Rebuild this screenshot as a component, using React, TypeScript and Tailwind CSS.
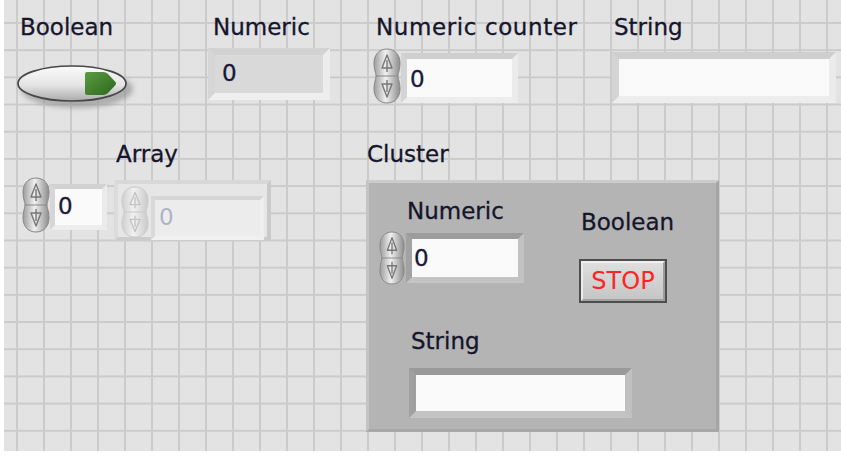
import React from "react";

function Label({ children, className = "" }: { children: React.ReactNode; className?: string }) {
  return (
    <div
      className={`font-['DejaVu_Sans',sans-serif] text-[23px] leading-[24px] text-[#15152b] whitespace-nowrap [-webkit-text-stroke:0.3px_#15152b] ${className}`}
    >
      {children}
    </div>
  );
}

function Value({ children, dim = false }: { children: React.ReactNode; dim?: boolean }) {
  return (
    <span
      className={`font-['DejaVu_Sans',sans-serif] text-[23px] leading-[24px] ${dim ? "text-[#aab4c6]" : "text-[#18183a] [-webkit-text-stroke:0.3px_#18183a]"}`}
    >
      {children}
    </span>
  );
}

/* Up/down increment arrows drawn as a rounded double-lobed knob */
function Spinner({ dim = false, w = 28, h = 56 }: { dim?: boolean; w?: number; h?: number }) {
  const id = dim ? "spin-dim" : "spin";
  const edge = dim ? "#c9c9c9" : "#888888";
  const arrow = dim ? "#c3c3c3" : "#767676";
  return (
    <svg width={w} height={h} viewBox="0 0 28 56" preserveAspectRatio="none" className="shrink-0">
      <defs>
        <linearGradient id={id} x1="0" x2="1" y1="0" y2="0">
          <stop offset="0" stopColor={dim ? "#cfcfcf" : "#9c9c9c"} />
          <stop offset="0.45" stopColor={dim ? "#f1f1f1" : "#f0f0f0"} />
          <stop offset="1" stopColor={dim ? "#c9c9c9" : "#8c8c8c"} />
        </linearGradient>
      </defs>
      <path
        d="M14 1 C23 1 27 8 27 15 C27 22 25 25 25 28 C25 31 27 34 27 41 C27 48 23 55 14 55 C5 55 1 48 1 41 C1 34 3 31 3 28 C3 25 1 22 1 15 C1 8 5 1 14 1 Z"
        fill={`url(#${id})`}
        stroke={edge}
        strokeWidth="1"
      />
      <line x1="3" y1="28" x2="25" y2="28" stroke={edge} strokeWidth="1" />
      <path d="M14 7 L19 20 H9 Z" fill="none" stroke={arrow} strokeWidth="1.4" strokeLinejoin="round" />
      <line x1="14" y1="12" x2="14" y2="24" stroke={arrow} strokeWidth="1.4" />
      <path d="M14 49 L19 36 H9 Z" fill="none" stroke={arrow} strokeWidth="1.4" strokeLinejoin="round" />
      <line x1="14" y1="32" x2="14" y2="44" stroke={arrow} strokeWidth="1.4" />
    </svg>
  );
}

/* Oval push button with a green lamp */
function OvalButton() {
  return (
    <svg width="124" height="48" viewBox="0 0 124 48" className="block">
      <defs>
        <linearGradient id="oval-fill" x1="0" x2="0" y1="0" y2="1">
          <stop offset="0" stopColor="#fbfbfb" />
          <stop offset="0.55" stopColor="#e4e4e4" />
          <stop offset="1" stopColor="#ababab" />
        </linearGradient>
        <linearGradient id="lamp" x1="0" x2="1" y1="0" y2="1">
          <stop offset="0" stopColor="#5c9c42" />
          <stop offset="1" stopColor="#2b671b" />
        </linearGradient>
        <filter id="oval-shadow" x="-20%" y="-40%" width="140%" height="180%">
          <feGaussianBlur stdDeviation="2.5" />
        </filter>
      </defs>
      <ellipse cx="60" cy="24" rx="56" ry="19" fill="#8a8a8a" opacity="0.6" filter="url(#oval-shadow)" />
      <ellipse cx="55" cy="18.5" rx="54" ry="17.5" fill="url(#oval-fill)" stroke="#474747" strokeWidth="1.7" />
      <path d="M70 7 H86 Q89 7 91 9 L98 16.5 Q100 18.5 98 20.5 L91 28 Q89 30 86 30 H70 Q68 30 68 28 V9 Q68 7 70 7 Z" fill="url(#lamp)" />
    </svg>
  );
}

export default function App() {
  return (
    <div className="w-[841px] h-[458px] bg-white overflow-hidden">
      <div className="ml-[4px] w-[837px] h-[451px] bg-[#e3e3e3] bg-[linear-gradient(to_right,#cbcbcb_2px,transparent_2px),linear-gradient(to_bottom,#cbcbcb_2px,transparent_2px)] bg-size-[27px_27px,27px_27.2px] bg-position-[12px_0px,0px_22px] pt-[15px]">
        {/* top row */}
        <div className="flex items-start h-[127px]">
          <div className="ml-[13px] w-[191px]">
            <Label className="ml-[3px]">Boolean</Label>
            <div className="mt-[26px]">
              <OvalButton />
            </div>
          </div>

          <div className="w-[165px]">
            <Label className="ml-[5px]">Numeric</Label>
            <div className="mt-[9px] w-[122px] h-[52px] border-[7px] border-t-[#d2d2d2] border-l-[#d6d6d6] border-r-[#ededed] border-b-[#efefef]">
              <div className="h-full bg-[#d9d9d9] pl-[7px] pt-[6px] flex items-start">
                <Value>0</Value>
              </div>
            </div>
          </div>

          <div className="w-[239px]">
            <Label className="ml-[3px] tracking-[0.6px]">Numeric counter</Label>
            <div className="mt-[9px] flex items-start">
              <Spinner />
              <div className="mt-[5px] w-[117px] h-[50px] border-[6px] border-t-[#cfcfcf] border-l-[#d4d4d4] border-r-[#ebebeb] border-b-[#ededed]">
                <div className="h-full bg-[#fafafa] pl-[3px] pt-[8px] flex items-start">
                  <Value>0</Value>
                </div>
              </div>
            </div>
          </div>

          <div>
            <Label className="ml-[2px]">String</Label>
            <div className="mt-[13px] w-[224px] h-[51px] border-[7px] border-t-[#cfcfcf] border-l-[#d4d4d4] border-r-[#ebebeb] border-b-[#ededed]">
              <div className="h-full bg-[#fafafa]" />
            </div>
          </div>
        </div>

        {/* second row */}
        <div className="flex items-start">
          <div className="ml-[18px] mt-[35px] flex items-start">
            <Spinner />
            <div className="mt-[7px] w-[57px] h-[46px] border-[5px] border-t-[#d2d2d2] border-l-[#d6d6d6] border-r-[#ebebeb] border-b-[#ededed]">
              <div className="h-full bg-[#fafafa] pl-[3px] pt-[5px] flex items-start">
                <Value>0</Value>
              </div>
            </div>
          </div>

          <div className="ml-[7px] w-[252px]">
            <Label className="ml-[2px]">Array</Label>
            <div className="mt-[14px] w-[157px] h-[61px] border-[4px] border-t-[#d8d8d8] border-l-[#dcdcdc] border-r-[#c9c9c9] border-b-[#cccccc] bg-[#e6e6e6] pl-[3px] pt-[2px] flex items-start">
              <Spinner dim w={28} h={52} />
              <div className="ml-[2px] mt-[10px] w-[113px] h-[44px] border-[4px] border-t-[#d6d6d6] border-l-[#d9d9d9] border-r-[#efefef] border-b-[#f0f0f0]">
                <div className="h-full bg-[#ececec] pl-[4px] pt-[5px] flex items-start">
                  <Value dim>0</Value>
                </div>
              </div>
            </div>
          </div>

          <div>
            <Label className="ml-[1px]">Cluster</Label>
            <div className="mt-[14px] w-[353px] h-[252px] bg-[#b4b4b4] border-[3px] border-t-[#cbcbcb] border-l-[#c4c4c4] border-r-[#a5a5a5] border-b-[#a8a8a8] pt-[16px] pl-[10px] flex items-start">
              <div className="w-[200px]">
                <Label className="ml-[28px]">Numeric</Label>
                <div className="mt-[8px] flex items-start">
                  <Spinner w={26} h={54} />
                  <div className="ml-[1px] mt-[2px] w-[118px] h-[50px] border-[6px] border-t-[#9c9c9c] border-l-[#a2a2a2] border-r-[#c2c2c2] border-b-[#c4c4c4]">
                    <div className="h-full bg-[#fafafa] pl-[2px] pt-[7px] flex items-start">
                      <Value>0</Value>
                    </div>
                  </div>
                </div>
                <Label className="ml-[32px] mt-[44px]">String</Label>
                <div className="ml-[30px] mt-[15px] w-[223px] h-[50px] border-[7px] border-t-[#9a9a9a] border-l-[#a0a0a0] border-r-[#c0c0c0] border-b-[#c3c3c3]">
                  <div className="h-full bg-[#fafafa]" />
                </div>
              </div>

              <div>
                <Label className="ml-[2px] mt-[11px]">Boolean</Label>
                <div className="mt-[25px] w-[88px] h-[44px] border-[2px] border-[#4e4e4e] bg-[#cfcfcf]">
                  <div className="h-full border-[2px] border-t-[#f0f0f0] border-l-[#ebebeb] border-r-[#9d9d9d] border-b-[#a2a2a2] bg-[linear-gradient(to_bottom,#dedede,#c6c6c6)] flex items-center justify-center">
                    <span className="font-['DejaVu_Sans',sans-serif] text-[24px] leading-[24px] text-[#ff2424]">STOP</span>
                  </div>
                </div>
              </div>
            </div>
          </div>
        </div>
      </div>
    </div>
  );
}
